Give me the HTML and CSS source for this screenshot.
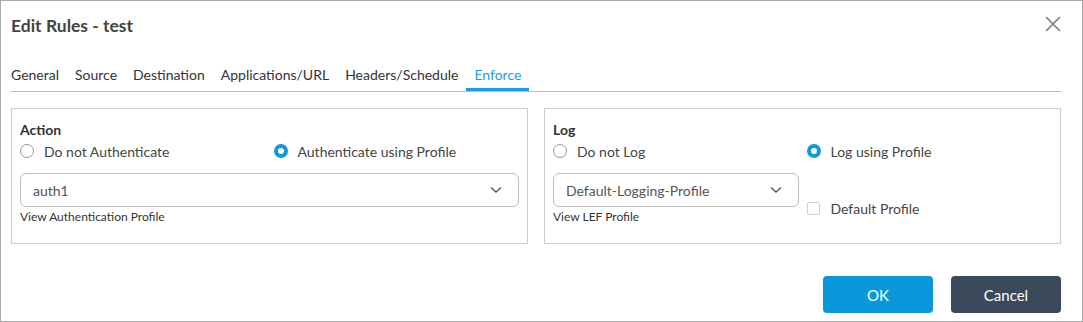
FILE: index.html
```html
<!DOCTYPE html>
<html lang="en">

<head>
    <meta charset="UTF-8">
    <title>Edit Rules - test</title>
    <link rel="stylesheet" href="styles.css">
</head>

<body>
    <div class="dialog">
        <div class="cabecalho">
            <h1>Edit Rules - test</h1>
            <button class="fechar" aria-label="Close">
                <svg width="16" height="16" viewBox="0 0 16 16">
                    <path d="M1 1 L15 15 M15 1 L1 15" stroke="#7a7a7a" stroke-width="1.6" fill="none" />
                </svg>
            </button>
        </div>

        <div class="abas">
            <span class="aba">General</span>
            <span class="aba">Source</span>
            <span class="aba">Destination</span>
            <span class="aba">Applications/URL</span>
            <span class="aba">Headers/Schedule</span>
            <span class="aba ativa">Enforce</span>
        </div>

        <div class="paineis">
            <div class="painel">
                <div class="painel-titulo">Action</div>
                <div class="opcoes">
                    <label class="radio"><span class="bolinha"></span>Do not Authenticate</label>
                    <label class="radio"><span class="bolinha marcada"></span>Authenticate using Profile</label>
                </div>
                <div class="campo">
                    <div class="select">
                        <span>auth1</span>
                        <svg class="seta" width="12" height="8" viewBox="0 0 12 8">
                            <path d="M1 1.5 L6 6 L11 1.5" stroke="#555" stroke-width="1.4" fill="none" />
                        </svg>
                    </div>
                    <div class="link">View Authentication Profile</div>
                </div>
            </div>

            <div class="painel">
                <div class="painel-titulo">Log</div>
                <div class="opcoes">
                    <label class="radio"><span class="bolinha"></span>Do not Log</label>
                    <label class="radio"><span class="bolinha marcada"></span>Log using Profile</label>
                </div>
                <div class="opcoes">
                    <div class="campo">
                        <div class="select">
                            <span>Default-Logging-Profile</span>
                            <svg class="seta" width="12" height="8" viewBox="0 0 12 8">
                                <path d="M1 1.5 L6 6 L11 1.5" stroke="#555" stroke-width="1.4" fill="none" />
                            </svg>
                        </div>
                        <div class="link">View LEF Profile</div>
                    </div>
                    <label class="checkbox"><span class="caixa"></span>Default Profile</label>
                </div>
            </div>
        </div>

        <div class="rodape">
            <button class="botao ok">OK</button>
            <button class="botao cancelar">Cancel</button>
        </div>
    </div>
</body>

</html>
```

FILE: styles.css
```css
body {
    margin: 0;
    padding: 0;
    font-family: 'Lato', sans-serif;
    background: #ffffff;
    color: #444;
}

.dialog {
    width: 1083px;
    height: 322px;
    box-sizing: border-box;
    border: 1px solid #a9a9a9;
    padding: 0 21px 0 10px;
}

.cabecalho {
    height: 48px;
    display: flex;
    align-items: center;
    justify-content: space-between;
}

h1 {
    margin: 0;
    font-size: 17.5px;
    font-weight: 700;
    color: #444;
}

.fechar {
    background: none;
    border: none;
    padding: 0;
    width: 16px;
    height: 16px;
    cursor: pointer;
    display: flex;
    margin-top: -2px;
}

.abas {
    display: flex;
    border-bottom: 1px solid #bdbdbd;
}

.aba {
    font-size: 14px;
    line-height: 17px;
    padding: 17px 8px 5px;
    color: #333;
    border-bottom: 3px solid transparent;
}

.aba:first-child {
    padding-left: 0;
}

.aba.ativa {
    color: #1a9be6;
    border-bottom-color: #1a9be6;
}

.paineis {
    margin-top: 16px;
    display: grid;
    grid-template-columns: 1fr 1fr;
    gap: 16px;
}

.painel {
    height: 136px;
    box-sizing: border-box;
    border: 1px solid #cccccc;
    padding: 12px 8px 0;
}

.painel-titulo {
    font-size: 14px;
    font-weight: 700;
    line-height: 17px;
    color: #333;
    margin-bottom: 3px;
}

.opcoes {
    display: grid;
    grid-template-columns: 1fr 1fr;
    gap: 8px;
}

.radio,
.checkbox {
    display: flex;
    align-items: center;
    height: 20px;
    font-size: 14px;
    color: #444;
}

.bolinha {
    width: 14px;
    height: 14px;
    box-sizing: border-box;
    border: 1px solid #999;
    border-radius: 50%;
    margin-right: 10px;
    background: #fff;
}

.bolinha.marcada {
    border: 4px solid #1597dd;
}

.campo {
    margin-top: 12px;
}

.select {
    height: 34px;
    box-sizing: border-box;
    border: 1px solid #bdbdbd;
    border-radius: 6px;
    padding: 0 16px 0 12px;
    display: flex;
    align-items: center;
    justify-content: space-between;
    font-size: 14px;
    color: #555;
}

.link {
    margin-top: 2px;
    font-size: 12px;
    line-height: 15px;
    color: #333;
}

.checkbox {
    margin-top: 37px;
}

.caixa {
    width: 13px;
    height: 13px;
    box-sizing: border-box;
    border: 1px solid #cfcfcf;
    border-radius: 2px;
    margin-right: 11px;
}

.rodape {
    margin-top: 32px;
    display: flex;
    justify-content: flex-end;
    gap: 18px;
}

.botao {
    width: 110px;
    height: 37px;
    border: none;
    border-radius: 4px;
    color: #fff;
    font-family: 'Lato', sans-serif;
    font-size: 15px;
    cursor: pointer;
}

.ok {
    background-color: #0a98da;
}

.cancelar {
    background-color: #3b4a5b;
}
```
